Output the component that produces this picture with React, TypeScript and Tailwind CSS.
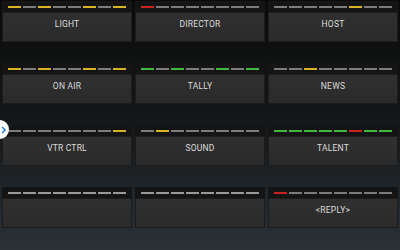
const Y = "bg-[#d6b423]"
const G = "bg-[#7c7c7c]"
const R = "bg-[#c8231f]"
const N = "bg-[#3fb83f]"
const L = "bg-[#9a9a9a]"

interface Tile {
  label: string
  leds: string[]
}

const tiles: Tile[] = [
  { label: "LIGHT", leds: [Y, G, Y, G, G, Y, G, Y] },
  { label: "DIRECTOR", leds: [R, G, G, G, G, G, G, G] },
  { label: "HOST", leds: [G, G, G, G, G, Y, G, G] },
  { label: "ON AIR", leds: [Y, G, Y, G, G, Y, G, Y] },
  { label: "TALLY", leds: [N, G, N, G, G, N, G, N] },
  { label: "NEWS", leds: [G, G, Y, G, G, G, G, G] },
  { label: "VTR CTRL", leds: [G, G, G, G, G, G, G, Y] },
  { label: "SOUND", leds: [G, Y, G, G, G, G, G, G] },
  { label: "TALENT", leds: [N, N, N, N, N, R, N, N] },
  { label: "", leds: [L, L, L, L, L, L, L, L] },
  { label: "", leds: [L, L, L, L, L, L, L, L] },
  { label: "<REPLY>", leds: [R, G, G, G, G, G, G, G] },
]

function IntercomKey({ label, leds }: Tile) {
  return (
    <div className="flex flex-col">
      {/* tally strip */}
      <div className="h-[11px] bg-[#141414] flex items-center gap-[2px] px-[6px]">
        {leds.map((c, i) => (
          <span key={i} className={`flex-1 h-[2px] ${c}`}></span>
        ))}
      </div>
      <div className="h-[30px] bg-gradient-to-b from-[#303030] to-[#2a2a2a] border border-[#1c1c1c] flex items-center justify-center pb-[6px]">
        <span className="text-[8.5px] text-[#dcdcdc] tracking-[0.2px]">{label}</span>
      </div>
    </div>
  )
}

export default function App() {
  return (
    <div
      className="relative w-[400px] h-[250px] overflow-hidden bg-gradient-to-b from-[#0a0a0a] via-[#15181a] to-[#2a3137]"
      style={{ fontFamily: "Roboto, 'Liberation Sans', sans-serif" }}
    >
      <div className="grid grid-cols-3 gap-x-[3px] gap-y-[21px] px-[2px] pt-[1px]">
        {tiles.map((t, i) => (
          <IntercomKey key={i} label={t.label} leds={t.leds} />
        ))}
      </div>

      {/* drawer handle */}
      <div className="absolute left-[-10px] top-[120px] w-[19px] h-[19px] rounded-full bg-white flex items-center justify-end pr-[3px]">
        <svg width="5" height="8" viewBox="0 0 5 8">
          <path d="M1 1 L4 4 L1 7" fill="none" stroke="#2f86d8" strokeWidth="1.6" />
        </svg>
      </div>
    </div>
  )
}
